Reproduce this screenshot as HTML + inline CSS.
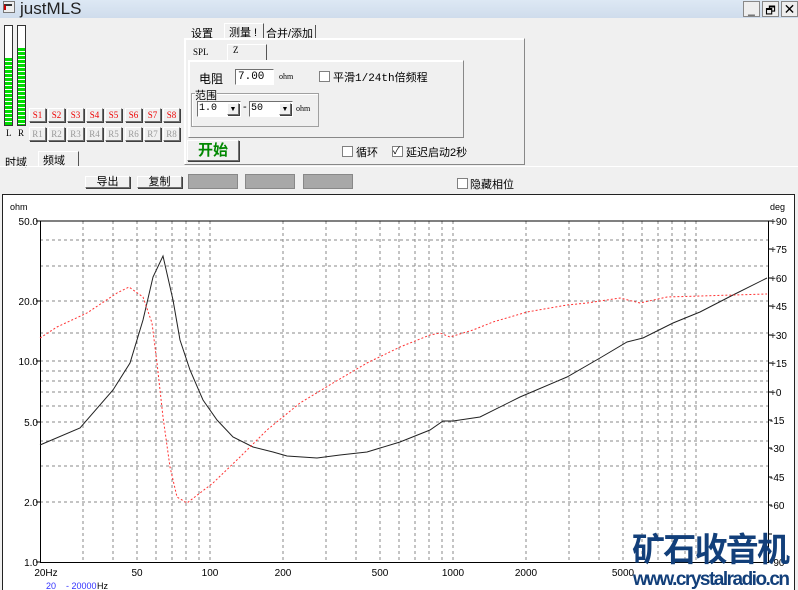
<!DOCTYPE html>
<html><head><meta charset="utf-8"><style>
*{margin:0;padding:0;box-sizing:border-box}
body{width:798px;height:590px;overflow:hidden;background:#f0f0f0;font-family:"Liberation Sans","Noto Sans CJK SC",sans-serif;font-size:11px;color:#000;position:relative}
.a{position:absolute}
.title{left:0;top:0;width:798px;height:18px;background:linear-gradient(#dde8f4,#cfdcec)}
.btn{position:absolute;background:#f0f0f0;border:1px solid;border-color:#fff #707070 #707070 #fff;box-shadow:1px 1px 0 #404040;text-align:center}
.sb{width:17px;height:14px;font:9px "Liberation Serif",serif;line-height:12px;color:#e00}
.rb{width:17px;height:14px;font:9px "Liberation Serif",serif;line-height:12px;color:#999}
.chk{position:absolute;width:11px;height:11px;background:#fff;border:1px solid #808080}
.sunk{position:absolute;background:#fff;border:1px solid;border-color:#707070 #fff #fff #707070}
.grp{position:absolute;border:1px solid #a0a0a0;box-shadow:1px 1px 0 #fff inset}
.meter{position:absolute;width:9px;height:101px;background:#fff;border:1px solid #333}
</style></head><body>
<div class="a title"></div>
<div class="a" style="left:3px;top:1px;width:12px;height:12px;border:1px solid #777;background:#eee"></div>
<div class="a" style="left:4px;top:4px;width:8px;height:6px;border-left:2px solid #c00;border-top:2px solid #333"></div>
<div class="a" style="left:20px;top:-1px;font-size:17px;color:#222">justMLS</div>
<div class="a" style="left:743px;top:1px;width:17px;height:16px;border:1px solid #888;background:#eee;font-size:12px;text-align:center;line-height:14px">_</div>
<div class="a" style="left:762px;top:1px;width:17px;height:16px;border:1px solid #888;background:#eee;font-size:11px;text-align:center">🗗</div>
<div class="a" style="left:781px;top:1px;width:17px;height:16px;border:1px solid #888;background:#eee;font-size:14px;text-align:center;line-height:14px">✕</div>

<div class="meter" style="left:4px;top:25px;background:#fff repeating-linear-gradient(#fff 0 1px,#0d0 1px 4px) 0 31px/7px 70px no-repeat"></div>
<div class="meter" style="left:17px;top:25px;background:#fff repeating-linear-gradient(#fff 0 1px,#0d0 1px 4px) 0 21px/7px 80px no-repeat"></div>
<div class="a" style="left:6px;top:128px;font:9px 'Liberation Serif',serif">L</div>
<div class="a" style="left:18px;top:128px;font:9px 'Liberation Serif',serif">R</div>
<div class="btn sb" style="left:29px;top:108px">S1</div><div class="btn sb" style="left:48px;top:108px">S2</div><div class="btn sb" style="left:67px;top:108px">S3</div><div class="btn sb" style="left:86px;top:108px">S4</div><div class="btn sb" style="left:105px;top:108px">S5</div><div class="btn sb" style="left:125px;top:108px">S6</div><div class="btn sb" style="left:144px;top:108px">S7</div><div class="btn sb" style="left:163px;top:108px">S8</div>
<div class="btn rb" style="left:29px;top:127px">R1</div><div class="btn rb" style="left:48px;top:127px">R2</div><div class="btn rb" style="left:67px;top:127px">R3</div><div class="btn rb" style="left:86px;top:127px">R4</div><div class="btn rb" style="left:105px;top:127px">R5</div><div class="btn rb" style="left:125px;top:127px">R6</div><div class="btn rb" style="left:144px;top:127px">R7</div><div class="btn rb" style="left:163px;top:127px">R8</div>
<div class="a" style="left:5px;top:154px">时域</div>
<div class="a" style="left:38px;top:151px;width:41px;height:16px;border:1px solid #fff;border-right-color:#555;border-bottom:none;padding-left:4px">频域</div>
<div class="a" style="left:0;top:166px;width:798px;height:1px;background:#fff"></div>

<div class="a" style="left:191px;top:25px">设置</div>
<div class="a" style="left:224px;top:23px;width:40px;height:16px;border:1px solid #fff;border-right-color:#555;border-bottom:none;padding-left:4px">测量 !</div>
<div class="a" style="left:266px;top:25px;width:50px;border-right:1px solid #555;height:13px">合并/添加</div>
<div class="grp" style="left:184px;top:38px;width:341px;height:127px;border-color:#fff #888 #888 #fff"></div>
<div class="a" style="left:193px;top:47px;font:9px 'Liberation Serif',serif">SPL</div>
<div class="a" style="left:227px;top:44px;width:40px;height:16px;border:1px solid #fff;border-right-color:#555;border-bottom:none;padding-left:5px;font:9px 'Liberation Serif',serif">Z</div>
<div class="grp" style="left:188px;top:60px;width:276px;height:78px;border-color:#fff #888 #888 #fff"></div>
<div class="a" style="left:199px;top:70px;font-size:12px">电阻</div>
<div class="sunk" style="left:235px;top:69px;width:39px;height:16px;font:11px 'Liberation Mono',monospace;padding:1px 2px">7.00</div>
<div class="a" style="left:279px;top:72px;font:8px 'Liberation Serif',serif">ohm</div>
<div class="chk" style="left:319px;top:71px"></div>
<div class="a" style="left:333px;top:69px;font:11px 'Liberation Mono','Noto Sans CJK SC',monospace">平滑1/24th倍频程</div>
<div class="grp" style="left:191px;top:93px;width:128px;height:34px"></div>
<div class="a" style="left:195px;top:87px;background:#f0f0f0;font-size:11px">范围</div>
<div class="sunk" style="left:197px;top:101px;width:44px;height:16px;font:10px 'Liberation Mono',monospace;padding:1px">1.0</div>
<div class="btn" style="left:227px;top:103px;width:12px;height:12px;font-size:7px;line-height:11px">▼</div>
<div class="a" style="left:243px;top:101px">-</div>
<div class="sunk" style="left:249px;top:101px;width:44px;height:16px;font:10px 'Liberation Mono',monospace;padding:1px">50</div>
<div class="btn" style="left:279px;top:103px;width:12px;height:12px;font-size:7px;line-height:11px">▼</div>
<div class="a" style="left:296px;top:104px;font:8px 'Liberation Serif',serif">ohm</div>
<div class="btn" style="left:187px;top:140px;width:52px;height:21px;color:#080;font-size:15px;font-weight:bold;line-height:19px">开始</div>
<div class="chk" style="left:342px;top:146px"></div><div class="a" style="left:356px;top:144px">循环</div>
<div class="chk" style="left:392px;top:146px;font-size:10px;line-height:9px">✓</div><div class="a" style="left:406px;top:144px">延迟启动2秒</div>

<div class="btn" style="left:85px;top:176px;width:45px;height:12px;line-height:11px">导出</div>
<div class="btn" style="left:137px;top:176px;width:45px;height:12px;line-height:11px">复制</div>
<div class="a" style="left:188px;top:174px;width:50px;height:15px;background:#a8a8a8;border:1px solid #888"></div>
<div class="a" style="left:245px;top:174px;width:50px;height:15px;background:#a8a8a8;border:1px solid #888"></div>
<div class="a" style="left:303px;top:174px;width:50px;height:15px;background:#a8a8a8;border:1px solid #888"></div>
<div class="chk" style="left:457px;top:178px"></div><div class="a" style="left:470px;top:176px">隐藏相位</div>

<svg class="a" style="left:0;top:0" width="798" height="590" font-family="Liberation Sans,sans-serif" font-size="10">
<rect x="2.5" y="194.5" width="792" height="400" fill="#fff" stroke="#222"/>
<g stroke="#888" stroke-dasharray="3,3" fill="none">
<path d="M83 221V562M113 221V562M137 221V562M156 221V562M172 221V562M186 221V562M199 221V562M210 221V562M283 221V562M326 221V562M356 221V562M380 221V562M399 221V562M415 221V562M429 221V562M442 221V562M453 221V562M526 221V562M569 221V562M599 221V562M623 221V562M642 221V562M658 221V562M672 221V562M685 221V562M696 221V562"/>
<path d="M40 240H768M40 266H768M40 301H768M40 333H768M40 361H768M40 371H768M40 381H768M40 392H768M40 406H768M40 422H768M40 441H768M40 466H768M40 502H768"/>
</g>
<path d="M40.5 221V562.5H768.5V221" fill="none" stroke="#000"/>
<path d="M40 221H768" stroke="#000"/>
<g stroke="#000"><path d="M36 221h4M36 301h4M36 361h4M36 422h4M36 502h4M36 562h4M768 221h4M768 249h4M768 278h4M768 306h4M768 335h4M768 363h4M768 392h4M768 420h4M768 448h4M768 477h4M768 505h4M768 534h4M768 562h4"/></g>
<polyline fill="none" stroke="#222" points="40,445 80,428 113,390 130,363 143,320 153,277 163,256 173,300 180,340 190,370 203,400 217,420 233,437 253,447 273,452 287,456 317,458 340,455 367,452 400,442 430,430 443,421 453,421 480,417 520,397 567,377 600,358 627,342 643,338 673,323 700,312 733,295 767,278"/>
<polyline fill="none" stroke="#f33" stroke-dasharray="2,2" points="40,338 57,327 87,313 117,293 129,287 143,297 152,323 157,363 163,417 170,467 177,497 187,503 213,483 240,457 267,430 300,403 333,383 367,363 400,347 430,335 440,333 450,337 473,330 493,322 527,312 567,305 587,303 620,298 640,303 667,297 700,296 767,294"/>
<text x="10" y="210" font-size="9">ohm</text>
<g text-anchor="end"><text x="38" y="225">50.0</text><text x="38" y="305">20.0</text><text x="38" y="365">10.0</text><text x="38" y="426">5.0</text><text x="38" y="506">2.0</text><text x="38" y="566">1.0</text></g>
<text x="770" y="210" font-size="9">deg</text>
<g><text x="770" y="225">+90</text><text x="770" y="253">+75</text><text x="770" y="282">+60</text><text x="770" y="310">+45</text><text x="770" y="339">+30</text><text x="770" y="367">+15</text><text x="770" y="396">+0</text><text x="770" y="424">-15</text><text x="770" y="452">-30</text><text x="770" y="481">-45</text><text x="770" y="509">-60</text><text x="770" y="566">-90</text></g>
<g text-anchor="middle"><text x="46" y="576">20Hz</text><text x="137" y="576">50</text><text x="210" y="576">100</text><text x="283" y="576">200</text><text x="380" y="576">500</text><text x="453" y="576">1000</text><text x="526" y="576">2000</text><text x="623" y="576">5000</text></g>
<text x="46" y="589" fill="#33f" font-size="9">20</text><text x="66" y="589" fill="#33f" font-size="9">- 20000</text><text x="97" y="589" font-size="9">Hz</text>
<text x="632" y="561" font-family="Noto Sans CJK SC,sans-serif" font-size="33" font-weight="bold" fill="#123f7a" textLength="158">矿石收音机</text>
<text x="633" y="585" font-family="Liberation Sans,sans-serif" font-size="19" font-weight="bold" fill="#123f7a" textLength="157">www.crystalradio.cn</text>
</svg>
</body></html>
